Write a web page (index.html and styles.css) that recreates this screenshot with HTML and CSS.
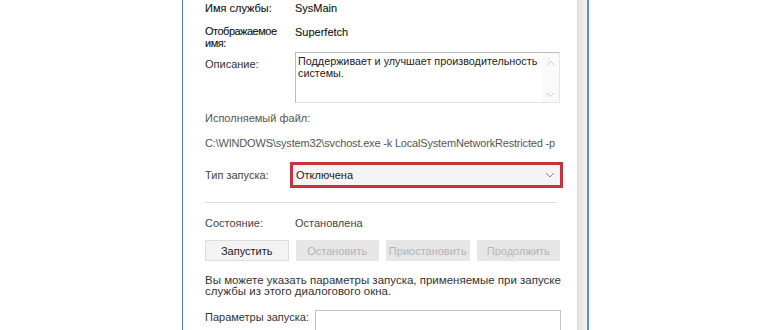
FILE: index.html
```html
<!DOCTYPE html>
<html lang="ru">
<head>
    <meta charset="UTF-8">
    <title>Свойства службы</title>
    <link rel="stylesheet" href="styles.css">
</head>
<body>
    <div class="window">
        <div class="page">
            <div class="row row-first">
                <span class="label strong">Имя службы:</span>
                <span class="value strong">SysMain</span>
            </div>
            <div class="row row-name">
                <span class="label strong">Отображаемое имя:</span>
                <span class="value strong">Superfetch</span>
            </div>
            <div class="row row-desc">
                <span class="label">Описание:</span>
                <div class="memo">
                    <div class="memo-text">Поддерживает и улучшает производительность системы.</div>
                    <div class="memo-scroll">
                        <svg width="9" height="6" viewBox="0 0 9 6"><path d="M1 5 L4.5 1.5 L8 5" fill="none" stroke="#c8c8c8" stroke-width="1"/></svg>
                        <svg width="9" height="6" viewBox="0 0 9 6"><path d="M1 1 L4.5 4.5 L8 1" fill="none" stroke="#c8c8c8" stroke-width="1"/></svg>
                    </div>
                </div>
            </div>

            <p class="caption">Исполняемый файл:</p>
            <p class="path">C:\WINDOWS\system32\svchost.exe -k LocalSystemNetworkRestricted -p</p>

            <div class="row row-start">
                <span class="label">Тип запуска:</span>
                <div class="highlight">
                    <div class="combo">
                        <span>Отключена</span>
                        <svg width="10" height="6" viewBox="0 0 10 6"><path d="M1 1 L5 5 L9 1" fill="none" stroke="#8a8a8a" stroke-width="1"/></svg>
                    </div>
                </div>
            </div>

            <div class="separator"></div>

            <div class="row row-state">
                <span class="label">Состояние:</span>
                <span class="value">Остановлена</span>
            </div>

            <div class="buttons">
                <button class="btn">Запустить</button>
                <button class="btn" disabled>Остановить</button>
                <button class="btn" disabled>Приостановить</button>
                <button class="btn" disabled>Продолжить</button>
            </div>

            <p class="note">Вы можете указать параметры запуска, применяемые при запуске службы из этого диалогового окна.</p>

            <div class="row row-params">
                <span class="label">Параметры запуска:</span>
                <div class="input"></div>
            </div>
        </div>
        <div class="frame-edge"></div>
    </div>
</body>
</html>
```

FILE: styles.css
```css
body {
    margin: 0;
    background-color: #fff;
    font-family: 'Liberation Sans', Arial, sans-serif;
    font-size: 11px;
    color: #333;
    overflow: hidden;
}

.window {
    display: flex;
    width: 404px;
    height: 330px;
    margin-left: 182px;
    border-left: 1px solid #4d7ec4;
    border-right: 2px solid #5b8dd3;
    overflow: hidden;
}

.page {
    flex: 1;
    background-color: #fff;
    border-right: 1px solid #dadada;
    padding: 2px 0 0 22px;
}

.frame-edge {
    width: 9px;
    background: linear-gradient(to right, #e4e4e4, #f3f3f3);
}

.row {
    display: flex;
    align-items: flex-start;
}

.label {
    width: 90px;
    flex-shrink: 0;
    line-height: 12px;
}

.value {
    line-height: 12px;
}

.strong {
    color: #111;
    -webkit-text-stroke: 0.1px #111;
}

.row-name {
    margin-top: 11px;
}

.row-name .label {
    letter-spacing: -0.5px;
}

.row-name .value {
    margin-top: 1px;
}

.row-desc {
    margin-top: 3px;
}

.row-desc .label {
    margin-top: 6px;
}

.memo {
    display: flex;
    box-sizing: border-box;
    width: 265px;
    height: 51px;
    border: 1px solid #bcbcbc;
    border-right-color: #e4e4e4;
    border-bottom-color: #e4e4e4;
}

.memo-text {
    flex: 1;
    padding: 2px 0 0 2px;
    font-family: 'Liberation Sans Narrow', 'Liberation Sans', sans-serif;
    font-size: 10.8px;
    line-height: 12px;
    color: #222;
}

.memo-scroll {
    width: 17px;
    display: flex;
    flex-direction: column;
    justify-content: space-between;
    align-items: center;
    padding: 7px 0 4px;
    background-color: #fafafa;
}

.caption {
    margin: 9px 0 0;
    line-height: 12px;
    color: #555;
}

.path {
    margin: 13px 0 0;
    line-height: 12px;
    color: #555;
    letter-spacing: -0.18px;
    white-space: nowrap;
}

.row-start {
    margin-top: 13px;
    align-items: center;
}

.row-start .label {
    width: 85px;
    color: #444;
}

.highlight {
    width: 267px;
    height: 20px;
    border: 3px solid #c8323c;
}

.combo {
    display: flex;
    align-items: center;
    justify-content: space-between;
    height: 20px;
    padding: 0 5px 0 3px;
    background-color: #f4f4f4;
    color: #222;
}

.separator {
    height: 1px;
    margin: 14px 20px 0 0;
    background-color: #dcdcdc;
}

.row-state {
    margin-top: 14px;
    color: #444;
}

.buttons {
    display: flex;
    gap: 7px;
    margin: 11px 0 0;
    width: 355px;
}

.btn {
    flex: 1;
    height: 21px;
    padding: 0;
    font-family: inherit;
    font-size: 11px;
    color: #222;
    background-color: #f3f3f3;
    border: 1px solid #dcdcdc;
}

.btn:disabled {
    color: #b4b4b4;
    background-color: #e6e6e6;
    border-color: #e6e6e6;
}

.note {
    margin: 14px 0 0;
    width: 366px;
    font-size: 11.5px;
    line-height: 11px;
    color: #333;
}

.row-params {
    margin-top: 13px;
}

.row-params .label {
    width: 110px;
    margin-top: 1px;
}

.input {
    width: 244px;
    height: 30px;
    border: 1px solid #c4c4c4;
}
```
